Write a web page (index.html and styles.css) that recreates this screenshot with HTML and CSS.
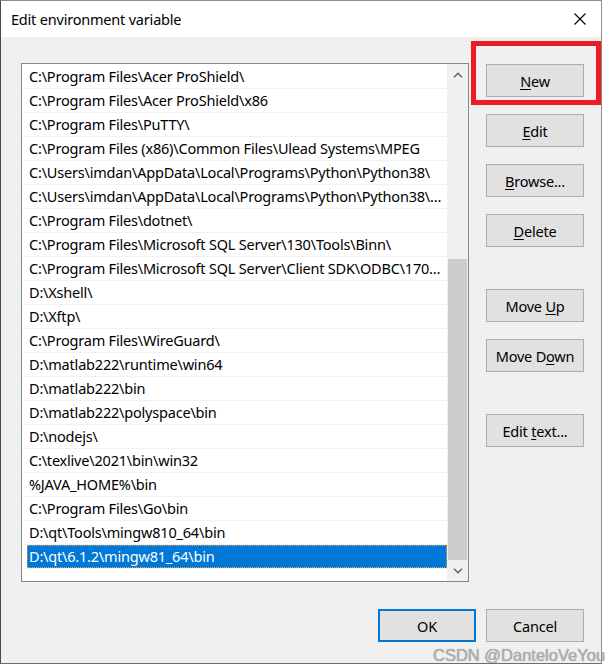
FILE: index.html
```html
<!DOCTYPE html>
<html lang="en">
<head>
<meta charset="utf-8">
<title>Edit environment variable</title>
<link rel="stylesheet" href="styles.css">
</head>
<body>
<div class="dialog">
  <div class="titlebar">
    <span class="title">Edit environment variable</span>
    <span class="close">
      <svg width="12" height="12" viewBox="0 0 12 12"><path d="M0.5 0.5 L11.5 11.5 M11.5 0.5 L0.5 11.5" stroke="#000" stroke-width="1.1" fill="none"/></svg>
    </span>
  </div>
  <div class="content">
    <div class="main">
      <div class="listbox">
        <div class="items">
          <div class="row"><div class="cell">C:\Program Files\Acer ProShield\</div></div>
          <div class="row"><div class="cell">C:\Program Files\Acer ProShield\x86</div></div>
          <div class="row"><div class="cell">C:\Program Files\PuTTY\</div></div>
          <div class="row"><div class="cell">C:\Program Files (x86)\Common Files\Ulead Systems\MPEG</div></div>
          <div class="row"><div class="cell">C:\Users\imdan\AppData\Local\Programs\Python\Python38\</div></div>
          <div class="row"><div class="cell">C:\Users\imdan\AppData\Local\Programs\Python\Python38\…</div></div>
          <div class="row"><div class="cell">C:\Program Files\dotnet\</div></div>
          <div class="row"><div class="cell">C:\Program Files\Microsoft SQL Server\130\Tools\Binn\</div></div>
          <div class="row"><div class="cell">C:\Program Files\Microsoft SQL Server\Client SDK\ODBC\170…</div></div>
          <div class="row"><div class="cell">D:\Xshell\</div></div>
          <div class="row"><div class="cell">D:\Xftp\</div></div>
          <div class="row"><div class="cell">C:\Program Files\WireGuard\</div></div>
          <div class="row"><div class="cell">D:\matlab222\runtime\win64</div></div>
          <div class="row"><div class="cell">D:\matlab222\bin</div></div>
          <div class="row"><div class="cell">D:\matlab222\polyspace\bin</div></div>
          <div class="row"><div class="cell">D:\nodejs\</div></div>
          <div class="row"><div class="cell">C:\texlive\2021\bin\win32</div></div>
          <div class="row"><div class="cell">%JAVA_HOME%\bin</div></div>
          <div class="row"><div class="cell">C:\Program Files\Go\bin</div></div>
          <div class="row"><div class="cell">D:\qt\Tools\mingw810_64\bin</div></div>
          <div class="row selected"><div class="cell">D:\qt\6.1.2\mingw81_64\bin</div></div>
        </div>
        <div class="scrollbar">
          <div class="arrow">
            <svg width="10" height="6" viewBox="0 0 10 6"><path d="M1 5.2 L5 1.2 L9 5.2" stroke="#606060" stroke-width="1.4" fill="none"/></svg>
          </div>
          <div class="track"><div class="thumb"></div></div>
          <div class="arrow">
            <svg width="10" height="6" viewBox="0 0 10 6"><path d="M1 0.8 L5 4.8 L9 0.8" stroke="#606060" stroke-width="1.4" fill="none"/></svg>
          </div>
        </div>
      </div>
      <div class="buttons">
        <div class="btn"><span><u>N</u>ew</span></div>
        <div class="btn"><span><u>E</u>dit</span></div>
        <div class="btn"><span><u>B</u>rowse...</span></div>
        <div class="btn"><span><u>D</u>elete</span></div>
        <div class="btn group"><span>Move <u>U</u>p</span></div>
        <div class="btn"><span>Move D<u>o</u>wn</span></div>
        <div class="btn group"><span>Edit <u>t</u>ext...</span></div>
      </div>
    </div>
    <div class="footer">
      <div class="btn default">OK</div>
      <div class="btn">Cancel</div>
    </div>
  </div>
  <div class="annotation"></div>
</div>
<div class="watermark">CSDN @DanteloVeYou</div>
</body>
</html>
```

FILE: styles.css
```css
* {
  box-sizing: border-box;
}

html, body {
  margin: 0;
  padding: 0;
  background: #ffffff;
}

body {
  position: relative;
  width: 607px;
  height: 672px;
  overflow: hidden;
  font-family: "Noto Sans", "Open Sans", sans-serif;
  font-size: 14.5px;
  letter-spacing: -0.2px;
  color: #000;
}

.dialog {
  position: relative;
  width: 602px;
  height: 664px;
  background: #f0f0f0;
  border: 1px solid #8c8c8c;
  border-left-color: #4a4a4a;
  border-bottom-color: #6e6e6e;
  display: flex;
  flex-direction: column;
}

.titlebar {
  height: 36px;
  flex: none;
  background: #ffffff;
  display: flex;
  align-items: center;
  justify-content: space-between;
  padding-left: 10px;
}

.title {
  font-size: 14.5px;
  color: #000;
}

.close {
  width: 42px;
  height: 36px;
  display: flex;
  align-items: center;
  justify-content: center;
}

.content {
  padding: 26px 17px 0 20px;
}

.main {
  display: flex;
  gap: 17px;
}

.listbox {
  width: 448px;
  height: 519px;
  border: 1px solid #828790;
  background: #ffffff;
  display: flex;
}

.items {
  width: 425px;
  padding-top: 1px;
  overflow: hidden;
}

.row {
  height: 24px;
  border-bottom: 1px solid #f0f0f0;
}

.cell {
  margin-left: 5px;
  padding-left: 2px;
  height: 23px;
  line-height: 23px;
  white-space: nowrap;
  overflow: hidden;
  text-overflow: ellipsis;
}

.row.selected .cell {
  background: #0078d7;
  color: #ffffff;
  outline: 1px dotted #e0a050;
  outline-offset: -1px;
}

.scrollbar {
  width: 21px;
  background: #f0f0f0;
  display: flex;
  flex-direction: column;
}

.arrow {
  height: 21px;
  flex: none;
  display: flex;
  align-items: center;
  justify-content: center;
}

.track {
  flex: 1;
  display: flex;
  flex-direction: column;
  justify-content: flex-end;
}

.thumb {
  height: 301px;
  margin: 0 1px;
  background: #cdcdcd;
}

.buttons {
  display: flex;
  flex-direction: column;
  gap: 17px;
  padding-top: 1px;
}

.buttons .group {
  margin-top: 25px;
}

.btn {
  width: 98px;
  height: 33px;
  background: #e1e1e1;
  border: 1px solid #adadad;
  display: flex;
  align-items: center;
  justify-content: center;
  font-size: 14.5px;
  color: #000;
}

.btn u {
  text-underline-offset: 2px;
}

.footer {
  margin-top: 27px;
  display: flex;
  justify-content: flex-end;
  gap: 10px;
}

.btn.default {
  border: 2px solid #0078d7;
}

.annotation {
  position: absolute;
  left: 470px;
  top: 40px;
  width: 130px;
  height: 64px;
  border: 5px solid #ed1c24;
}

.watermark {
  position: absolute;
  left: 433px;
  top: 646px;
  font-family: "Liberation Sans", Arial, sans-serif;
  font-size: 16.5px;
  line-height: 18px;
  letter-spacing: 0;
  color: #b0b0b0;
  white-space: nowrap;
  text-shadow: 0 0 1px #8a8a8a;
}
```
